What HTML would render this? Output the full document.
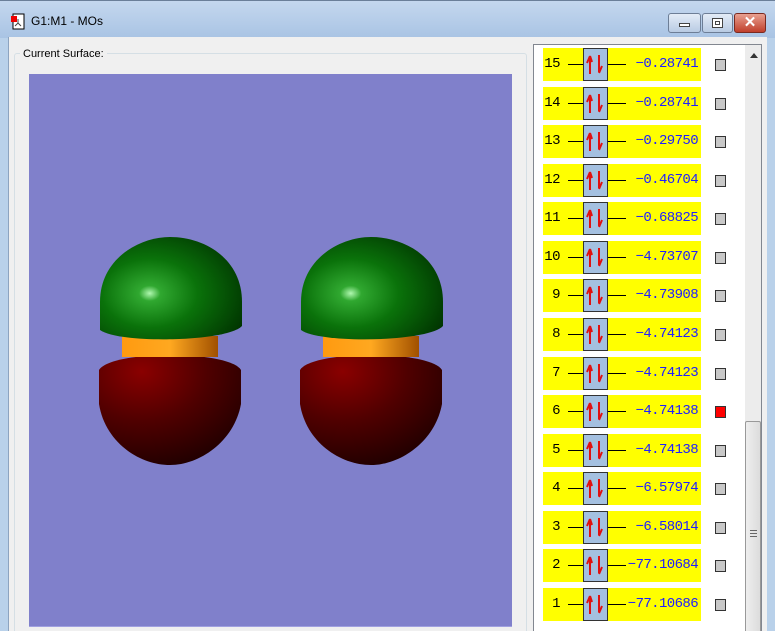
<!DOCTYPE html>
<html><head><meta charset="utf-8"><style>
*{margin:0;padding:0;box-sizing:border-box}
html,body{width:775px;height:631px;overflow:hidden}
body{background:#b9d1ea;font-family:"Liberation Sans",sans-serif;position:relative}
.title{position:absolute;left:0;top:0;width:775px;height:38px;background:linear-gradient(#c4d7ee,#a9c4e4);border-top:1px solid #6b7f99}
.title .t{position:absolute;left:31px;top:13px;font-size:12px;color:#000}
.client{position:absolute;left:8px;top:37px;width:759px;height:594px;background:#f0f0f0;border-left:1px solid #8da4c0}
.grp{position:absolute;left:14px;top:53px;width:513px;height:590px;border:1px solid #d5dfe5;border-radius:3px}
.canvas{position:absolute;left:29px;top:74px;width:483px;height:553px;background:#8080cb;border-bottom:1px solid #a0a0e0}
.list{position:absolute;left:533px;top:44px;width:229px;height:600px;background:#fff;border:1px solid #828790;overflow:hidden}
.row{position:absolute;left:9px;width:158px;height:33px;background:#ffff00;font-family:"Liberation Mono","DejaVu Sans Mono",monospace;font-size:14px}
.num{position:absolute;right:141px;top:8px;color:#000;letter-spacing:-0.5px}
.ln{position:absolute;top:16px;height:1px;background:#000}
.box{position:absolute;left:40px;top:0;width:25px;height:33px;background:#a4c0e0;border:1.5px solid #333}
.val{position:absolute;right:3px;top:8px;color:#2020ff;letter-spacing:-0.6px}
.chk{position:absolute;left:181px;width:11px;height:12px;background:#c8c8c8;border:1.5px solid #333}
.sb{position:absolute;left:211px;top:0;width:17px;height:600px;background:#ececec}
.thumb{position:absolute;left:211px;top:376px;width:16px;height:230px;background:linear-gradient(90deg,#eee,#dcdcdc);border:1px solid #999;border-radius:2px}
.btn{position:absolute;top:12px;height:20px;border:1px solid #6d7e96;border-radius:3px;background:linear-gradient(#e3ecf7,#b9cbe3)}
</style></head><body>
<div class="title">
<svg style="position:absolute;left:10px;top:12px" width="16" height="18"><rect x="3" y="1" width="11" height="15" fill="#fff" stroke="#000"/><rect x="1" y="3" width="6" height="6" fill="#e00"/><path d="M8 6 V10 M8 10 L5 13 M8 10 L11 13" stroke="#444"/></svg>
<span class="t">G1:M1 - MOs</span>
<div class="btn" style="left:668px;width:33px"><div style="position:absolute;left:10px;top:9px;width:11px;height:4px;background:#fff;border:1px solid #444"></div></div>
<div class="btn" style="left:702px;width:31px"><div style="position:absolute;left:9px;top:4px;width:11px;height:10px;background:#fff;border:1px solid #444"><div style="margin:2px;width:5px;height:4px;border:1px solid #444"></div></div></div>
<div class="btn" style="left:734px;width:32px;background:linear-gradient(#e8a090,#c0402c);border-color:#7a2a20;color:#fff;font-weight:bold;text-align:center;font-size:15px;line-height:18px">✕</div>
</div>
<div class="client"></div>
<div class="grp"></div>
<span style="position:absolute;left:20px;top:48px;font-size:11px;background:#f0f0f0;padding:0 3px">Current Surface:</span>
<div class="canvas">
<svg width="483" height="553" style="position:absolute;left:0;top:0">
<defs>
<radialGradient id="g" cx="0.35" cy="0.55" r="0.75"><stop offset="0" stop-color="#b0f8b0"/><stop offset="0.1" stop-color="#30a830"/><stop offset="0.45" stop-color="#0a720a"/><stop offset="1" stop-color="#003000"/></radialGradient>
<radialGradient id="r" cx="0.3" cy="0.15" r="0.9"><stop offset="0" stop-color="#8a0000"/><stop offset="0.5" stop-color="#500000"/><stop offset="1" stop-color="#200000"/></radialGradient>
<linearGradient id="o" x1="0" x2="1"><stop offset="0" stop-color="#ff9a10"/><stop offset="0.5" stop-color="#ffa820"/><stop offset="1" stop-color="#a05000"/></linearGradient>
<g id="blob">
<path d="M70,296 C82,276 200,276 212,296 L212,330 C205,368 170,391 141,391 C110,391 76,368 70,330 Z" fill="url(#r)"/>
<path d="M93,262 L189,262 L189,283 L93,283 Z" fill="url(#o)"/>
<path d="M71,228 C71,185 110,163 141,163 C176,163 213,185 213,228 L213,252 C198,268 90,270 71,256 Z" fill="url(#g)"/>
</g></defs>
<use href="#blob"/><use href="#blob" x="201"/>
</svg></div>
<div class="list">
<div class="sb"></div>
<div style="position:absolute;left:216px;top:8px;width:0;height:0;border:4px solid transparent;border-bottom:5px solid #333;border-top:none"></div>
<div class="thumb"><div style="position:absolute;left:4px;top:108px;width:7px;height:7px;border-top:1px solid #666;border-bottom:1px solid #666"><div style="margin-top:2px;border-top:1px solid #666"></div></div></div>
ROWS
</div>
<script>
var d=[["15","-0.28741"],["14","-0.28741"],["13","-0.29750"],["12","-0.46704"],["11","-0.68825"],["10","-4.73707"],["9","-4.73908"],["8","-4.74123"],["7","-4.74123"],["6","-4.74138"],["5","-4.74138"],["4","-6.57974"],["3","-6.58014"],["2","-77.10684"],["1","-77.10686"]];
var h="";
d.forEach(function(r,i){var y=3+i*38.57;
h+='<div class="row" style="top:'+y+'px"><span class="num">'+r[0]+'</span><div class="ln" style="left:25px;width:15px"></div><div class="box"><svg width="22" height="30"><path d="M6 25 V8 M6 7 L3 14 M6 7 L8 13" stroke="#e01010" stroke-width="2" fill="none"/><path d="M15 6 V23 M15 24 L18 17" stroke="#e01010" stroke-width="2" fill="none"/></svg></div><div class="ln" style="left:65px;width:18px"></div><span class="val">'+r[1].replace("-","\u2212")+'</span></div>';
h+='<div class="chk" style="top:'+(y+11)+'px;'+(r[0]=="6"?'background:#f00':'')+'"></div>';});
document.querySelector('.list').innerHTML=document.querySelector('.list').innerHTML.replace('ROWS',h);
</script>
</body></html>
